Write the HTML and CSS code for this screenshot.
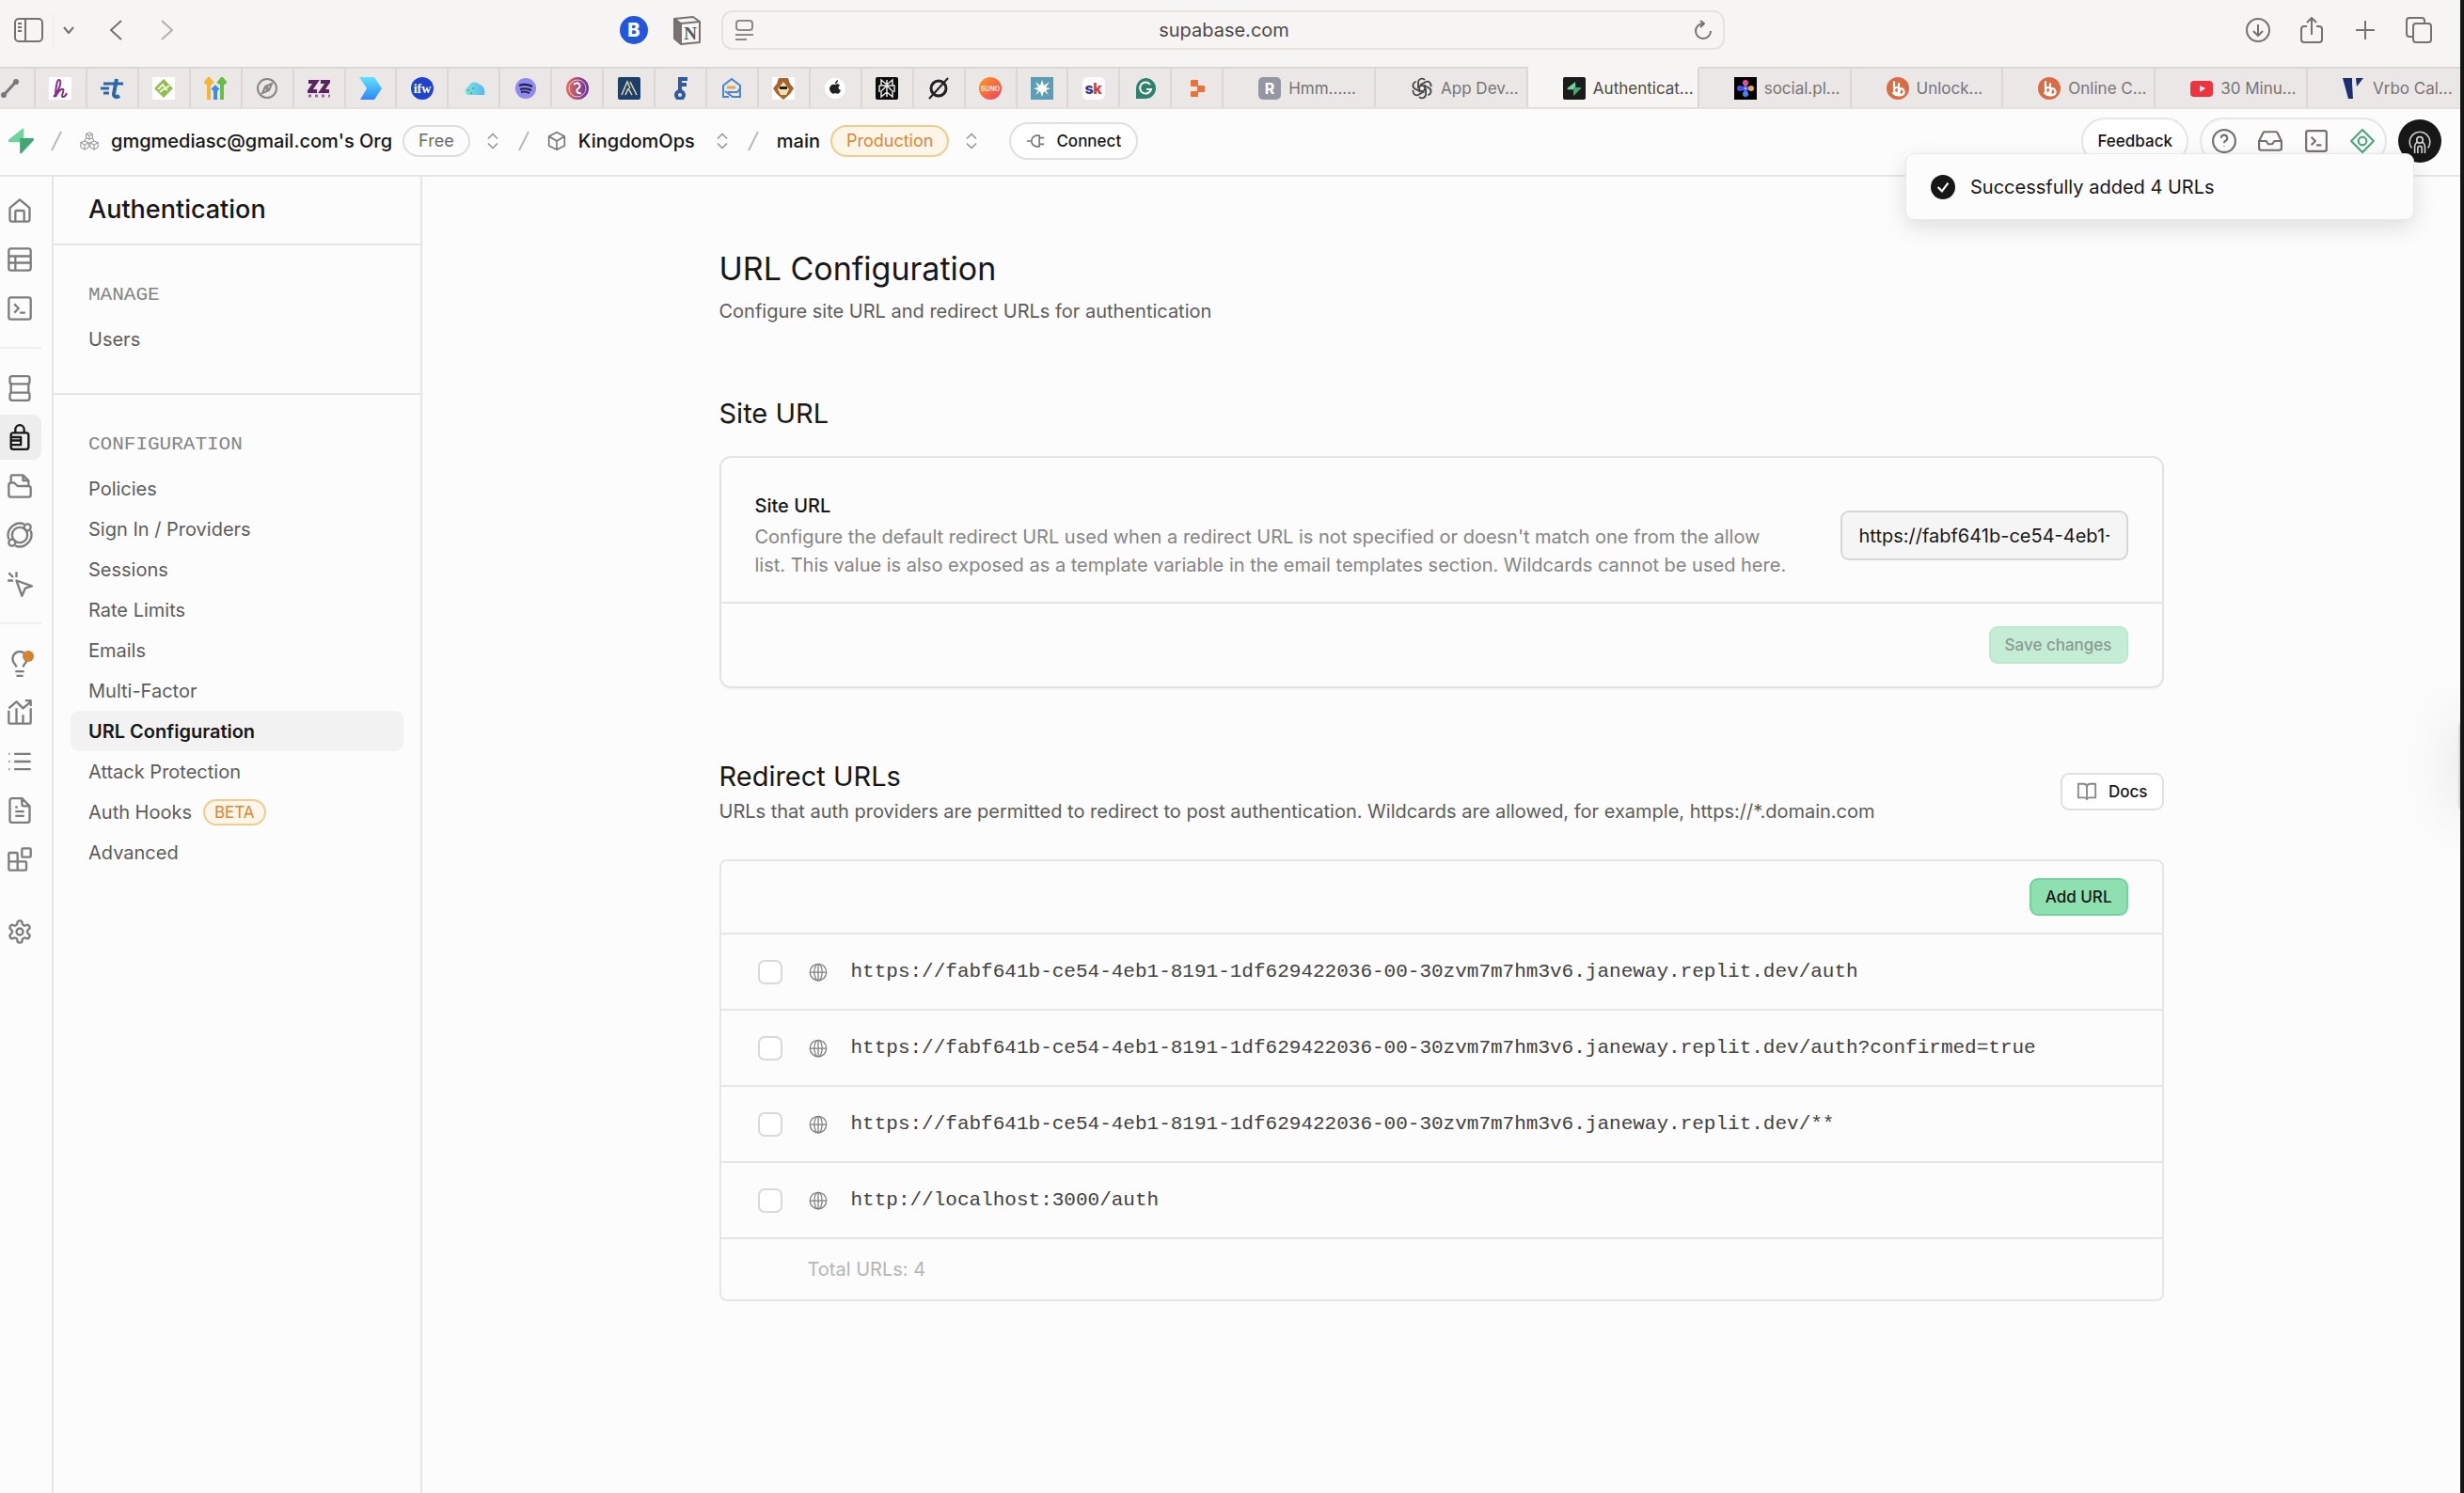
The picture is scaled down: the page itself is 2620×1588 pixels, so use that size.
FILE: index.html
```html
<!DOCTYPE html>
<html lang="en">
<head>
<meta charset="utf-8">
<meta name="viewport" content="width=device-width, initial-scale=1">
<title>Authentication | Supabase</title>
<link rel="stylesheet" href="styles.css">
</head>
<body>
<svg class="defs" aria-hidden="true">
  <defs>
    <linearGradient id="cyan" x1="0" y1="0" x2="0" y2="1"><stop offset="0" stop-color="#5fe3fb"/><stop offset="1" stop-color="#2f86f6"/></linearGradient>
    <linearGradient id="cloud" x1="0" y1="0" x2="1" y2="0"><stop offset="0" stop-color="#7fe6d2"/><stop offset="1" stop-color="#58b6f5"/></linearGradient>
    <linearGradient id="plum" x1="0" y1="0" x2="1" y2="0"><stop offset="0" stop-color="#e4705a"/><stop offset="1" stop-color="#6a2aa0"/></linearGradient>
    <linearGradient id="sun" x1="0" y1="0" x2="1" y2="1"><stop offset="0" stop-color="#fb9b1e"/><stop offset="1" stop-color="#f23c64"/></linearGradient>
    <symbol id="updown" viewBox="0 0 24 24"><path d="m6 9 6-6 6 6M6 15l6 6 6-6"/></symbol>
    <symbol id="slash" viewBox="0 0 12 24"><path d="M11 2 1 22"/></symbol>
    <symbol id="terminal" viewBox="0 0 24 24"><rect x="2" y="2" width="20" height="20" rx="2"/><path d="m7 8 4 4-4 4M12 16h5"/></symbol>
    <symbol id="globe" viewBox="0 0 24 24"><circle cx="12" cy="12" r="10.500"/><ellipse cx="12" cy="12" rx="5" ry="10.500"/><path d="M1.500 12h21M12 1.500v21"/></symbol>
    <symbol id="bolt" viewBox="0 0 24 24"><path fill="#6fd39c" d="M13.500.8c.6-.8 1.200-.3 1.200.5v8.200h8c1.100 0 1.600 1.200.9 2L14.700 13H2c-1.200 0-1.800-1.300-1-2.200z"/><path fill="#3fa873" d="M11.300 9.500h11.400c1.100 0 1.600 1.200.9 2L12.600 23.300c-.5.600-1.300.3-1.300-.5z"/></symbol>
    <symbol id="bb" viewBox="0 0 24 24"><circle cx="12" cy="12" r="12" fill="#d96b45"/><path d="M8 5v9a3 3 0 0 0 6 0 3 3 0 0 0-6 0M13 7v6M13 14a3 3 0 1 0 5 0 3 3 0 0 0-5-1M7 17c3 3 8 3 11 1" fill="none" stroke="#fff" stroke-width="2.200" stroke-linecap="round"/></symbol>
  </defs>
</svg>

<div class="window">
  <header class="toolbar">
    <div class="toolbar-side">
      <button class="tool" aria-label="Show sidebar"><svg class="i32" viewBox="0 0 32 32"><rect x="1" y="4" width="29" height="24" rx="4"/><path d="M12 4v24M4 9h4M4 13h4M4 17h4"/></svg></button>
      <span class="tool-sep"></span>
      <button class="tool tool-menu" aria-label="Tab groups"><svg class="i14" viewBox="0 0 14 14"><path d="m2 4 5 6 5-6"/></svg></button>
      <button class="tool tool-back" aria-label="Back"><svg class="i28" viewBox="0 0 28 28"><path d="M20 4 9 14l11 10"/></svg></button>
      <button class="tool dim" aria-label="Forward"><svg class="i28" viewBox="0 0 28 28"><path d="m8 4 11 10L8 24"/></svg></button>
    </div>
    <div class="address-group">
      <button class="tool" aria-label="Extension B"><svg class="i30" viewBox="0 0 30 30"><circle cx="15" cy="15" r="15" fill="#2257dd" stroke="none"/><text x="15" y="22" class="fav-text" font-size="20" font-weight="800" fill="#fff">B</text></svg></button>
      <button class="tool tool-notion" aria-label="Notion"><svg class="i32" viewBox="0 0 32 32"><path d="m2 4 20-2 7 5v22l-20 2-7-6zM2 4l7 5v22M9 9l20-2"/><path d="m3 5 6 5v19l-6-5z" fill="#777371"/><text x="19" y="26" class="fav-serif" font-size="19" font-weight="700" fill="#5c5856">N</text></svg></button>
      <div class="address">
        <svg class="i22" viewBox="0 0 22 22"><rect x="2" y="1" width="17" height="10" rx="3"/><path d="M1 16h19M1 21h12"/></svg>
        <span class="address-text">supabase.com</span>
        <button class="tool" aria-label="Reload"><svg class="i22" viewBox="0 0 22 22"><path d="M11 4a8 8 0 1 0 8 8M8 1l4 3-4 4"/></svg></button>
      </div>
    </div>
    <div class="toolbar-actions">
      <button class="tool" aria-label="Downloads"><svg class="i28" viewBox="0 0 28 28"><circle cx="14" cy="14" r="12"/><path d="M14 8v12M9 15l5 5 5-5"/></svg></button>
      <button class="tool" aria-label="Share"><svg class="i28" viewBox="0 0 28 28"><path d="M9 10H6a3 3 0 0 0-3 3v11a3 3 0 0 0 3 3h16a3 3 0 0 0 3-3V13a3 3 0 0 0-3-3h-3M14 19V1M9 6l5-5 5 5"/></svg></button>
      <button class="tool" aria-label="New tab"><svg class="i28" viewBox="0 0 28 28"><path d="M14 4v20M4 14h20"/></svg></button>
      <button class="tool" aria-label="Tab overview"><svg class="i28" viewBox="0 0 28 28"><rect x="8" y="7" width="19" height="20" rx="3"/><path d="M8 21H4a3 3 0 0 1-3-3V4a3 3 0 0 1 3-3h13a3 3 0 0 1 3 3v3"/></svg></button>
    </div>
  </header>

  <nav class="tabs" aria-label="Browser tabs">
    <a class="pin first" href="#"><svg class="fav" viewBox="0 0 24 24"><path d="M4 19 16 6" stroke="#777" stroke-width="3"/><circle cx="4" cy="19" r="3" fill="#777"/><circle cx="17" cy="5" r="3" fill="#777"/></svg></a>
    <a class="pin" href="#"><svg class="fav" viewBox="0 0 24 24"><path fill="#fff" d="M0 0h24v24H0z"/><path d="M5 21C11 15 14 4 11 3S7 15 7 21c2-5 6-9 8-8s-3 8 0 8 3-2 4-4" fill="none" stroke="#8a2b90" stroke-width="2"/></svg></a>
    <a class="pin" href="#"><svg class="fav" viewBox="0 0 24 24"><path d="M3 7h8M0 12h9M3 17h6M11 7h13" stroke="#2b66a8" stroke-width="3"/><path d="m17 2-3 16c0 3 3 4 6 2" fill="none" stroke="#2b66a8" stroke-width="4"/></svg></a>
    <a class="pin" href="#"><svg class="fav" viewBox="0 0 24 24"><path fill="#fff" d="M0 0h24v24H0z"/><path fill="#94bd50" d="m12 2 10 10-10 10L2 12z"/><path d="m6 13 5-5 3 4 4-3M8 16l5-4 3 2" fill="none" stroke="#eef6dd" stroke-width="2"/></svg></a>
    <a class="pin" href="#"><svg class="fav" viewBox="0 0 24 24" fill="none" stroke-width="4"><path stroke="#f3b532" d="M5 24V4M1 7l4-5 4 5"/><path stroke="#3d8bf0" d="M12 24V12M9 14l3-3 3 3"/><path stroke="#65bf43" d="M19 24V4M15 7l4-5 4 5"/></svg></a>
    <a class="pin" href="#"><svg class="fav" viewBox="0 0 24 24" fill="none" stroke="#888583" stroke-width="2"><circle cx="12" cy="12" r="10"/><path d="m17 7-3 7-7 3 3-7z"/><circle cx="12" cy="12" r="1"/></svg></a>
    <a class="pin" href="#"><svg class="fav" viewBox="0 0 24 24"><path d="M1 5h8L2 15h8M14 5h8l-7 10h8" fill="none" stroke="#5a2361" stroke-width="4"/><path d="M1 20h23" stroke="#9d6aa3" stroke-width="3" stroke-dasharray="3 4"/></svg></a>
    <a class="pin" href="#"><svg class="fav" viewBox="0 0 24 24"><path fill="url(#cyan)" d="M0 0h16l8 12-8 12H1l7-12z"/></svg></a>
    <a class="pin" href="#"><svg class="fav" viewBox="0 0 24 24"><circle cx="12" cy="12" r="12" fill="#2043cf"/><text x="12" y="17" class="fav-serif" font-size="14" font-weight="700" fill="#fff">ifw</text></svg></a>
    <a class="pin" href="#"><svg class="fav" viewBox="0 0 24 24"><path fill="url(#cloud)" d="M5 19a5 5 0 0 1 1-9 7 7 0 0 1 12-2c4 1 6 5 5 11z"/><path d="M6 14h.1M9 17h.1M11 12h.1" stroke="#3aa6c9" stroke-width="2" stroke-linecap="round"/></svg></a>
    <a class="pin" href="#"><svg class="fav" viewBox="0 0 24 24"><circle cx="12" cy="12" r="11" fill="#8f8af0"/><path d="M5 9c5-2 10-1 14 1M6 13c4-1 8-1 12 1M7 16c4-1 7 0 9 1" fill="none" stroke="#22204a" stroke-width="2"/></svg></a>
    <a class="pin" href="#"><svg class="fav" viewBox="0 0 24 24"><circle cx="12" cy="12" r="12" fill="url(#plum)"/><circle cx="12" cy="12" r="9" fill="none" stroke="#fff" stroke-opacity=".7"/><path d="M8 8c5-4 9 1 5 4s0 6 3 5" fill="none" stroke="#fff" stroke-width="2"/></svg></a>
    <a class="pin" href="#"><svg class="fav" viewBox="0 0 24 24"><rect width="24" height="24" rx="2" fill="#1d3f6c"/><path d="m4 19 6-14 3 7M8 19l3-7M13 5l7 14M11 12l4 7" fill="none" stroke="#e3d9a6" stroke-width="1.500"/></svg></a>
    <a class="pin" href="#"><svg class="fav" viewBox="0 0 24 24" fill="none" stroke="#31599f" stroke-width="4"><circle cx="11" cy="19" r="4"/><path d="M11 15V2h8M11 8h7"/></svg></a>
    <a class="pin" href="#"><svg class="fav" viewBox="0 0 24 24" fill="none" stroke="#4a86cf" stroke-width="2"><path d="M9 21H3V9l9-7 9 7v12h-8L5 15M21 12l-3 4H8"/><path stroke="#e6a93c" stroke-width="3" d="M7 11h9"/></svg></a>
    <a class="pin" href="#"><svg class="fav" viewBox="0 0 24 24"><path fill="#fff" d="M0 0h24v24H0z"/><path fill="#a9642b" d="m7 1 10 0 2 6 4 5-4 6-7 6-7-6-4-6 4-5z"/><path fill="#efe3b4" d="m12 5 6 8-3 6H9l-3-6z"/><path fill="#26201c" d="M8 10h8v3H8z"/></svg></a>
    <a class="pin" href="#"><svg class="fav" viewBox="0 0 24 24"><circle cx="12" cy="12" r="11" fill="#fff"/><path fill="#222" d="M12 8c2-1 4-1 5 1-2 1-2 4 1 5-1 3-3 5-6 3-3 2-5-1-6-4 0-4 3-6 6-5zM12 7c0-2 1-3 3-4 0 2-1 4-3 4z"/></svg></a>
    <a class="pin" href="#"><svg class="fav" viewBox="0 0 24 24"><rect width="24" height="24" rx="2" fill="#0d0d0d"/><path d="M12 3v18M12 8 6 3v6M12 8l6-5v6M4 9h16v7M4 9v7M12 9l-6 6v6l6-5M12 9l6 6v6l-6-5" fill="none" stroke="#e6e6e6" stroke-width="1.500"/></svg></a>
    <a class="pin" href="#"><svg class="fav" viewBox="0 0 24 24" fill="none" stroke="#222" stroke-width="3"><ellipse cx="12" cy="12" rx="8" ry="8"/><path stroke-width="2" d="M2 23 22 1"/></svg></a>
    <a class="pin" href="#"><svg class="fav" viewBox="0 0 24 24"><circle cx="12" cy="12" r="12" fill="url(#sun)"/><text x="12" y="15" class="fav-text" font-size="7" font-weight="700" fill="#ffe9d6">SUNO</text></svg></a>
    <a class="pin" href="#"><svg class="fav" viewBox="0 0 24 24"><path fill="#5c9db3" d="M0 0h24v24H0z"/><path fill="#fff" d="m12 3 2 6 6-4-4 6 5 1-5 2 3 5-5-4-2 6-2-6-5 4 3-5-5-2 5-1-3-6 5 4z"/></svg></a>
    <a class="pin" href="#"><svg class="fav" viewBox="0 0 24 24"><rect width="24" height="24" rx="5" fill="#fbfafc"/><text x="7" y="18" class="fav-text" font-size="16" font-weight="800" fill="#2c3196">s</text><text x="16" y="18" class="fav-text" font-size="16" font-weight="800" fill="#e2353c">k</text></svg></a>
    <a class="pin" href="#"><svg class="fav" viewBox="0 0 24 24"><path fill="#2f806c" d="M12 1a11 11 0 1 1 0 22H2V12A11 11 0 0 1 12 1z"/><path d="M17 8a6 6 0 1 0 1 5h-5" fill="none" stroke="#fff" stroke-width="2"/></svg></a>
    <a class="pin" href="#"><svg class="fav" viewBox="0 0 24 24" fill="#ee7035"><rect x="5" y="3" width="8" height="7" rx="1"/><rect x="12" y="9" width="8" height="7" rx="1"/><rect x="5" y="15" width="8" height="6" rx="1"/></svg></a>
    <a class="tab" href="#"><svg class="fav" viewBox="0 0 24 24"><rect width="24" height="24" rx="5" fill="#9596a3"/><text x="12" y="18" class="fav-text" font-size="16" font-weight="700" fill="#fff">R</text></svg><span>Hmm......</span></a>
    <a class="tab" href="#"><svg class="fav" viewBox="0 0 24 24" fill="none" stroke="#444" stroke-width="1.800"><path d="M12 8.500 8 11v-6a4 4 0 0 1 7-2"/><path d="M12 8.500 8 11v-6a4 4 0 0 1 7-2" transform="rotate(60 12 12)"/><path d="M12 8.500 8 11v-6a4 4 0 0 1 7-2" transform="rotate(120 12 12)"/><path d="M12 8.500 8 11v-6a4 4 0 0 1 7-2" transform="rotate(180 12 12)"/><path d="M12 8.500 8 11v-6a4 4 0 0 1 7-2" transform="rotate(240 12 12)"/><path d="M12 8.500 8 11v-6a4 4 0 0 1 7-2" transform="rotate(300 12 12)"/></svg><span>App Dev...</span></a>
    <a class="tab active" href="#" aria-current="page"><svg class="fav" viewBox="0 0 24 24"><rect width="24" height="24" rx="2" fill="#1b1b1b"/><svg x="4" y="5" width="15" height="15"><use href="#bolt"/></svg></svg><span>Authenticat...</span></a>
    <a class="tab" href="#"><svg class="fav" viewBox="0 0 24 24"><path d="M0 0h24v24H0z"/><path d="M12 6v12M6 12h12" stroke="#4a5af2" stroke-width="4"/><circle cx="12" cy="6" r="3" fill="#e9508e"/><circle cx="6" cy="12" r="3" fill="#4c4ff0"/><circle cx="18" cy="12" r="3" fill="#f5a43a"/><circle cx="12" cy="18" r="3" fill="#3d8bf2"/><circle cx="12" cy="12" r="1" fill="#fff"/></svg><span>social.pl...</span></a>
    <a class="tab" href="#"><svg class="fav"><use href="#bb"/></svg><span>Unlock...</span></a>
    <a class="tab" href="#"><svg class="fav"><use href="#bb"/></svg><span>Online C...</span></a>
    <a class="tab" href="#"><svg class="fav" viewBox="0 0 24 24"><rect y="4" width="24" height="17" rx="4" fill="#ee3440"/><path fill="#fff" d="m10 9 6 3-6 4z"/></svg><span>30 Minu...</span></a>
    <a class="tab" href="#"><svg class="fav" viewBox="0 0 24 24"><path fill="#1c2f6e" d="M0 1h10v6l1 16H6zM14 1h8l-7 9z"/></svg><span>Vrbo Cal...</span></a>
  </nav>

  <header class="app-bar">
    <div class="crumbs">
      <a class="brand" href="#" aria-label="Supabase"><svg class="i28"><use href="#bolt"/></svg></a>
      <svg class="slash"><use href="#slash"/></svg>
      <a class="crumb" href="#"><svg class="i20 thin" viewBox="0 0 24 24"><path d="m12 1 4 2v5l-4 2-4-2V3zM8 3l4 2 4-2M12 5v5M6 12l5 2v6l-5 3-5-3v-6zM1 14l5 3 5-3M6 17v6M18 12l5 2v6l-5 3-5-3v-6zM13 14l5 3 5-3M18 17v6M8 8l-2 4M16 8l2 4"/></svg><span>gmgmediasc@gmail.com's Org</span></a>
      <span class="pill">Free</span>
      <button class="tool switcher" aria-label="Switch organization"><svg class="i20"><use href="#updown"/></svg></button>
      <svg class="slash"><use href="#slash"/></svg>
      <a class="crumb" href="#"><svg class="i20" viewBox="0 0 24 24"><path d="m12 1 10 5v12l-10 5-10-5V6zM2 6l10 6 10-6M12 12v11"/></svg><span>KingdomOps</span></a>
      <button class="tool switcher" aria-label="Switch project"><svg class="i20"><use href="#updown"/></svg></button>
      <svg class="slash"><use href="#slash"/></svg>
      <a class="crumb" href="#"><span>main</span></a>
      <span class="pill amber">Production</span>
      <button class="tool switcher" aria-label="Switch branch"><svg class="i20"><use href="#updown"/></svg></button>
      <button class="connect"><svg class="i20" viewBox="0 0 24 24"><path d="M1 12h6M17 5h-3a7 7 0 0 0 0 14h3zM17 8h6M17 16h6"/></svg>Connect</button>
    </div>
    <div class="account">
      <button class="feedback">Feedback</button>
      <div class="helpers">
        <button class="tool" aria-label="Help"><svg class="i26" viewBox="0 0 24 24"><circle cx="12" cy="12" r="11"/><path d="M9 9a3 3 0 1 1 4 3c-1 .5-1 1-1 2M12 17v.5"/></svg></button>
        <button class="tool" aria-label="Inbox"><svg class="i26" viewBox="0 0 24 24"><path d="M22 12h-6l-2 3h-4l-2-3H2M5 4 1 12v7a2 2 0 0 0 2 2h18a2 2 0 0 0 2-2v-7l-4-8a2 2 0 0 0-1-1H6a2 2 0 0 0-1 1z"/></svg></button>
        <button class="tool" aria-label="SQL editor"><svg class="i26"><use href="#terminal"/></svg></button>
        <button class="tool leaf" aria-label="Assistant"><svg class="i26" viewBox="0 0 24 24"><path d="m12 1 11 11-11 11L1 12z"/><circle cx="12" cy="12" r="4"/></svg></button>
      </div>
      <button class="avatar" aria-label="Account"><svg class="i26" viewBox="0 0 24 24"><path d="M4 19a10 10 0 1 1 16 0M7 24v-6c0-2 1-4 3-5M17 24v-6c0-2-1-4-3-5M10 24v-5a2 2 0 0 1 4 0v5"/><circle cx="12" cy="11" r="3"/></svg></button>
    </div>
    <div class="toast" role="status"><svg class="i26" viewBox="0 0 24 24"><circle cx="12" cy="12" r="12" fill="#171717"/><path d="m7 12 4 4 6-8" fill="none" stroke="#fff" stroke-width="2"/></svg>Successfully added 4 URLs</div>
  </header>

  <div class="workspace">
    <nav class="rail" aria-label="Product">
      <div class="rail-group">
        <a href="#" aria-label="Home"><svg class="i28" viewBox="0 0 24 24"><path d="M3 9.500 12 2l9 7.500V20a2 2 0 0 1-2 2H5a2 2 0 0 1-2-2zM8 22v-9a1 1 0 0 1 1-1h6a1 1 0 0 1 1 1v9"/></svg></a>
        <a href="#" aria-label="Table editor"><svg class="i28" viewBox="0 0 24 24"><rect x="2" y="2" width="20" height="20" rx="2"/><path d="M2 9h20M2 15h20M8 9v13"/></svg></a>
        <a href="#" aria-label="SQL editor"><svg class="i28"><use href="#terminal"/></svg></a>
      </div>
      <div class="rail-group">
        <a href="#" aria-label="Database"><svg class="i28" viewBox="0 0 24 24"><rect x="3" y="1" width="18" height="7" rx="2"/><rect x="3" y="16" width="18" height="7" rx="2"/><path d="M4 8v8M20 8v8"/></svg></a>
        <a class="on" href="#" aria-label="Authentication"><svg class="i28" viewBox="0 0 24 24"><rect x="4" y="8" width="16" height="15" rx="2"/><path d="M8 8V5a4 4 0 0 1 8 0v3M4 12h9v7H4M4 15h8"/></svg></a>
        <a href="#" aria-label="Storage"><svg class="i28" viewBox="0 0 24 24"><path d="M4 9V3a1 1 0 0 1 1-1h10l5 5v4M15 2v5h5M2 20V11a2 2 0 0 1 2-2h3l3 3h10a2 2 0 0 1 2 2v6a2 2 0 0 1-2 2H4a2 2 0 0 1-2-2z"/></svg></a>
        <a href="#" aria-label="Edge Functions"><svg class="i28" viewBox="0 0 24 24"><path d="M16 2A11 11 0 0 0 2 16M8 22A11 11 0 0 0 22 8"/><circle cx="12" cy="12" r="7"/><circle cx="19" cy="5" r="3"/><circle cx="5" cy="19" r="3"/></svg></a>
        <a href="#" aria-label="Realtime"><svg class="i28" viewBox="0 0 24 24"><path d="m9 9 14 5-6 2-3 7zM9 1v5M1 9h5M2 2l4 4"/></svg></a>
      </div>
      <div class="rail-group">
        <a class="alert" href="#" aria-label="Advisors"><svg class="i28" viewBox="0 0 24 24"><path d="M15 15c.3-1.500.8-2.200 2-3.500A6.500 6.500 0 1 0 7 11.500c1.200 1.300 1.700 2 2 3.500M8 19h8M9 23h6"/></svg></a>
        <a href="#" aria-label="Reports"><svg class="i28" viewBox="0 0 24 24"><path d="M2 10v11a1 1 0 0 0 1 1h18a1 1 0 0 0 1-1V8M2 8l7-6 6 6 7-6M17 1h5v5M9 8v14M15 14v8"/></svg></a>
        <a href="#" aria-label="Logs"><svg class="i28" viewBox="0 0 24 24"><path d="M7 5h15M7 12h15M7 19h15M2 5h1M2 12h1M2 19h1"/></svg></a>
        <a href="#" aria-label="API docs"><svg class="i28" viewBox="0 0 24 24"><path d="M14 1H5a2 2 0 0 0-2 2v18a2 2 0 0 0 2 2h14a2 2 0 0 0 2-2V8zM14 1v5a2 2 0 0 0 2 2h5M8 9h2M8 13h8M8 17h8"/></svg></a>
        <a href="#" aria-label="Integrations"><svg class="i28" viewBox="0 0 24 24"><rect x="14" y="2" width="8" height="8" rx="1"/><path d="M10 22V7a1 1 0 0 0-1-1H3a1 1 0 0 0-1 1v14a1 1 0 0 0 1 1h14a1 1 0 0 0 1-1v-6a1 1 0 0 0-1-1H2"/></svg></a>
      </div>
      <div class="rail-group">
        <a href="#" aria-label="Project settings"><svg class="i28" viewBox="0 0 24 24"><path d="M12.220 2h-.44a2 2 0 0 0-2 2v.18a2 2 0 0 1-1 1.730l-.43.250a2 2 0 0 1-2 0l-.15-.08a2 2 0 0 0-2.730.730l-.22.380a2 2 0 0 0 .730 2.730l.150.100a2 2 0 0 1 1 1.720v.510a2 2 0 0 1-1 1.740l-.15.090a2 2 0 0 0-.73 2.730l.220.380a2 2 0 0 0 2.730.730l.150-.08a2 2 0 0 1 2 0l.430.250a2 2 0 0 1 1 1.730V20a2 2 0 0 0 2 2h.440a2 2 0 0 0 2-2v-.18a2 2 0 0 1 1-1.730l.430-.25a2 2 0 0 1 2 0l.150.080a2 2 0 0 0 2.730-.73l.220-.39a2 2 0 0 0-.73-2.730l-.15-.08a2 2 0 0 1-1-1.740v-.5a2 2 0 0 1 1-1.740l.150-.09a2 2 0 0 0 .730-2.730l-.22-.38a2 2 0 0 0-2.730-.73l-.15.080a2 2 0 0 1-2 0l-.43-.25a2 2 0 0 1-1-1.730V4a2 2 0 0 0-2-2z"/><circle cx="12" cy="12" r="3"/></svg></a>
      </div>
    </nav>

    <aside class="sidebar">
      <h2 class="sidebar-title">Authentication</h2>
      <section class="menu">
        <h3>MANAGE</h3>
        <ul>
          <li><a href="#">Users</a></li>
        </ul>
      </section>
      <section class="menu">
        <h3>CONFIGURATION</h3>
        <ul>
          <li><a href="#">Policies</a></li>
          <li><a href="#">Sign In / Providers</a></li>
          <li><a href="#">Sessions</a></li>
          <li><a href="#">Rate Limits</a></li>
          <li><a href="#">Emails</a></li>
          <li><a href="#">Multi-Factor</a></li>
          <li><a class="on" href="#" aria-current="page">URL Configuration</a></li>
          <li><a href="#">Attack Protection</a></li>
          <li><a href="#">Auth Hooks <span class="beta">BETA</span></a></li>
          <li><a href="#">Advanced</a></li>
        </ul>
      </section>
    </aside>

    <main class="content">
      <div class="column">
        <h1>URL Configuration</h1>
        <p class="lede">Configure site URL and redirect URLs for authentication</p>

        <h2 class="section-title">Site URL</h2>
        <form class="card">
          <div class="field">
            <div class="field-text">
              <label for="site-url">Site URL</label>
              <p>Configure the default redirect URL used when a redirect URL is not specified or doesn't match one from the allow<br>list. This value is also exposed as a template variable in the email templates section. Wildcards cannot be used here.</p>
            </div>
            <input id="site-url" type="text" value="https://fabf641b-ce54-4eb1-">
          </div>
          <div class="card-foot"><button class="btn primary" type="button" disabled>Save changes</button></div>
        </form>

        <div class="section-head">
          <div>
            <h2 class="section-title">Redirect URLs</h2>
            <p class="lede">URLs that auth providers are permitted to redirect to post authentication. Wildcards are allowed, for example, https://*.domain.com</p>
          </div>
          <a class="btn" href="#"><svg class="i22" viewBox="0 0 24 24"><path d="M12 5v16M2 3h6a4 4 0 0 1 4 3 4 4 0 0 1 4-3h6v16h-7a3 3 0 0 0-3 2 3 3 0 0 0-3-2H2z"/></svg>Docs</a>
        </div>
        <div class="list">
          <div class="list-head"><button class="btn primary">Add URL</button></div>
          <ul>
            <li><input type="checkbox" id="u1"><label for="u1"><svg class="i20"><use href="#globe"/></svg>https://fabf641b-ce54-4eb1-8191-1df629422036-00-30zvm7m7hm3v6.janeway.replit.dev/auth</label></li>
            <li><input type="checkbox" id="u2"><label for="u2"><svg class="i20"><use href="#globe"/></svg>https://fabf641b-ce54-4eb1-8191-1df629422036-00-30zvm7m7hm3v6.janeway.replit.dev/auth?confirmed=true</label></li>
            <li><input type="checkbox" id="u3"><label for="u3"><svg class="i20"><use href="#globe"/></svg>https://fabf641b-ce54-4eb1-8191-1df629422036-00-30zvm7m7hm3v6.janeway.replit.dev/**</label></li>
            <li><input type="checkbox" id="u4"><label for="u4"><svg class="i20"><use href="#globe"/></svg>http://localhost:3000/auth</label></li>
          </ul>
          <div class="list-foot">Total URLs: 4</div>
        </div>
      </div>
      <div class="edge-glow"></div>
    </main>
  </div>
</div>
</body>
</html>
```
FILE: styles.css
```css
* { box-sizing: border-box; }

:root {
  --ink: #171717;
  --body: #5c5c5c;
  --muted: #858585;
  --line: #e6e6e6;
  --sans: Inter, "Liberation Sans", sans-serif;
  --mono: "Liberation Mono", monospace;
}

html { height: 100%; }

body {
  margin: 0;
  min-height: 100%;
  display: flex;
  background: #141616;
  color: var(--ink);
  font: 20px/30px var(--sans);
}

h1, h2, h3, p, ul { margin: 0; padding: 0; font-weight: 400; }
ul { list-style: none; }
a { color: inherit; text-decoration: none; }
button, input { font: inherit; color: inherit; }
svg { flex: none; }
.defs { position: absolute; width: 0; height: 0; }

.window {
  flex: 1;
  min-width: 0;
  margin-right: 4px;
  display: flex;
  flex-direction: column;
  background: #fcfcfc;
  overflow: hidden;
}

.i14 { width: 14px; height: 14px; }
.i20 { width: 20px; height: 20px; }
.i22 { width: 22px; height: 22px; }
.i26 { width: 26px; height: 26px; }
.i28 { width: 28px; height: 28px; }
.i30 { width: 30px; height: 30px; }
.i32 { width: 32px; height: 32px; }

.tool, .rail a, .crumb, .connect, .avatar, .address, .btn, .list label, .slash {
  fill: none;
  stroke-width: 2;
  stroke-linejoin: round;
}
.tool { display: flex; padding: 0; border: 0; background: none; stroke: #75716f; }
.dim { stroke: #b3afad; }
.fav-text { font-family: var(--sans); text-anchor: middle; stroke: none; }
.fav-serif { font-family: "Liberation Serif", serif; text-anchor: middle; stroke: none; }

/* browser toolbar */
.toolbar {
  height: 71px;
  padding: 0 30px 8px 15px;
  display: grid;
  grid-template-columns: 644px 1fr 752px;
  align-items: center;
  background: #f7f5f4;
}
.toolbar-side, .toolbar-actions, .address-group { display: flex; align-items: center; }
.tool-sep { width: 1px; height: 34px; margin: 0 9px; background: #ebe8e6; }
.tool-back { margin: 0 27px 0 29px; }
.address-group { gap: 26px; }
.tool-notion { margin-right: -6px; }
.address {
  flex: 1;
  height: 42px;
  padding: 0 10px 0 12px;
  display: flex;
  align-items: center;
  justify-content: space-between;
  border: 2px solid #e6e2e0;
  border-radius: 12px;
  stroke: #8d8987;
}
.address-text { color: #4c4a49; }
.toolbar-actions { justify-content: flex-end; gap: 29px; }

/* browser tabs */
.tabs {
  height: 45px;
  display: flex;
  background: #eae7e6;
  border-bottom: 2px solid #e3e0de;
}
.tabs a {
  display: flex;
  align-items: center;
  border-top: 2px solid #dad6d4;
  border-right: 2px solid #dcd7d5;
  color: #777473;
  font-size: 17px;
  white-space: nowrap;
}
.pin { flex: 0 1 55px; justify-content: center; }
.tabs .first { flex: 0 0 38px; justify-content: flex-start; }
.tab { flex: 1 1 162px; gap: 8px; padding-left: 37px; overflow: hidden; }
.tabs .active { flex-basis: 182px; background: #f7f5f4; border-top-color: #f7f5f4; color: #4c4a49; }
.fav { width: 24px; height: 24px; }
.tabs .tab:last-child { border-right: 0; }

/* application header */
.app-bar {
  position: relative;
  min-height: 72px;
  display: flex;
  justify-content: space-between;
  border-bottom: 2px solid var(--line);
}
.crumbs, .account { display: flex; align-items: center; padding-bottom: 2px; }
.crumbs { padding-left: 8px; }
.brand { display: flex; margin-right: 5px; }
.slash { width: 12px; height: 24px; margin: 0 19px 0 13px; stroke: #b9b9b9; }
.crumb { display: flex; align-items: center; gap: 13px; font-weight: 500; stroke: #777; }
.thin { stroke-width: 1px; }
.pill {
  height: 34px;
  margin-left: 11px;
  padding: 0 15px;
  border: 2px solid #dedede;
  border-radius: 17px;
  color: #6b6b6b;
  font-size: 18px;
  line-height: 30px;
}
.amber { border-color: #f0cd8f; background: #fdf5e8; color: #d98736; }
.switcher { margin-left: 10px; padding: 0 4px; stroke: #979797; }
.crumb + .switcher { margin-left: 15px; }
.connect {
  height: 40px;
  margin-left: 26px;
  padding: 0 16px;
  display: flex;
  align-items: center;
  gap: 12px;
  border: 2px solid #e0e0e0;
  border-radius: 20px;
  background: #fff;
  font-size: 17px;
  font-weight: 500;
  stroke: #777;
}
.account { padding-right: 20px; gap: 12px; }
.feedback {
  height: 50px;
  padding: 0 15px;
  border: 2px solid var(--line);
  border-radius: 25px;
  background: #fff;
  font-size: 17px;
  font-weight: 500;
}
.helpers {
  height: 50px;
  padding: 0 11px;
  display: flex;
  align-items: center;
  gap: 23px;
  border: 2px solid var(--line);
  border-radius: 25px;
}
.leaf { stroke: #4fa67a; }
.avatar {
  width: 46px;
  height: 46px;
  padding: 0;
  display: grid;
  place-items: center;
  border: 0;
  border-radius: 50%;
  background: #171717;
  stroke: #d0d0d0;
  stroke-width: 1.500;
}
.toast {
  position: absolute;
  z-index: 2;
  top: 47px;
  right: 49px;
  width: 541px;
  height: 71px;
  padding: 0 26px;
  display: flex;
  align-items: center;
  gap: 16px;
  border: 1px solid #e8e8e8;
  border-radius: 9px;
  background: #fcfcfc;
  box-shadow: 0 8px 24px rgba(0, 0, 0, .12);
}

/* icon rail */
.workspace { flex: 1; display: flex; }
.rail { flex: none; width: 57px; padding-top: 12px; border-right: 2px solid var(--line); }
.rail-group { display: flex; flex-direction: column; gap: 4px; margin-right: 11px; padding-bottom: 17px; }
.rail-group + .rail-group { padding-top: 18px; border-top: 2px solid #efefef; }
.rail-group:last-child { padding-top: 12px; border-top: 0; }
.rail a {
  position: relative;
  height: 48px;
  padding-right: 3px;
  display: grid;
  place-items: center;
  border-radius: 0 9px 9px 0;
  stroke: #7d7d7d;
}
.rail .on { background: #ededed; stroke: #171717; }
.alert::after {
  content: "";
  position: absolute;
  top: 10px;
  left: 24px;
  width: 12px;
  height: 12px;
  border-radius: 50%;
  background: #d38234;
}

/* section menu */
.sidebar { flex: none; width: 392px; border-right: 2px solid var(--line); }
.sidebar-title { height: 73px; padding-left: 37px; border-bottom: 2px solid var(--line); font-size: 27px; font-weight: 500; line-height: 70px; }
.menu { padding: 38px 18px 36px; }
.menu + .menu { border-top: 2px solid var(--line); }
.menu h3 { margin: 0 19px 10px; color: var(--muted); font: 21px/30px var(--mono); }
.menu a { height: 43px; padding-left: 19px; display: flex; align-items: center; gap: 12px; border-radius: 9px; color: var(--body); }
.menu .on { background: #f2f2f2; color: var(--ink); font-weight: 600; }
.beta { padding: 0 10px; border: 2px solid #f0cd8f; border-radius: 14px; background: #fdf5e8; color: #d98736; font-size: 17px; line-height: 24px; }

/* main content */
.content { position: relative; flex: 1; min-width: 0; padding: 73px 40px; overflow: hidden; }
.column { max-width: 1536px; margin: 0 auto; }
h1 { font-size: 34px; line-height: 50px; }
.lede { margin-top: 5px; color: var(--body); }
.section-title { font-size: 29px; line-height: 40px; }
.lede + .section-title { margin: 74px 0 25px; }
.card { border: 2px solid #e3e3e3; border-radius: 12px; box-shadow: 0 2px 2px rgba(0, 0, 0, .03); }
.field { padding: 36px 36px 24px; display: flex; align-items: center; justify-content: space-between; border-bottom: 2px solid var(--line); }
.field label { display: block; font-weight: 500; }
.field p { margin-top: 3px; color: var(--muted); }
.field input {
  width: 306px;
  height: 53px;
  padding: 0 18px;
  border: 2px solid #d6d6d6;
  border-radius: 9px;
  background: #f5f5f5;
}
.card-foot, .list-head { display: flex; justify-content: flex-end; padding: 24px 36px; }
.btn {
  height: 40px;
  padding: 0 15px;
  display: flex;
  align-items: center;
  gap: 12px;
  border: 2px solid #e0e0e0;
  border-radius: 9px;
  background: #fff;
  font-size: 17px;
  font-weight: 500;
  stroke: #888;
}
.primary { border-color: #75d19f; background: #8fe0b1; }
.primary:disabled { border-color: #bce8cf; background: #c5edd6; color: #8b9a91; }
.section-head { margin: 74px 0 36px; display: flex; justify-content: space-between; align-items: center; }
.section-head .lede { margin-top: 2px; }
.list { border: 2px solid var(--line); border-radius: 8px; }
.list-head { padding: 18px 36px; }
.list li { height: 81px; padding-left: 39px; display: flex; align-items: center; gap: 28px; border-top: 2px solid var(--line); }
.list label { display: flex; align-items: center; gap: 25px; color: #424242; font: 21px/30px var(--mono); stroke: #7d7d7d; stroke-width: 1.500; }
.list input {
  appearance: none;
  width: 26px;
  height: 26px;
  margin: 0;
  border: 2px solid #d9d9d9;
  border-radius: 7px;
  background: #fff;
}
.list-foot { padding: 17px 92px; border-top: 2px solid var(--line); color: #b5b5b5; }
.edge-glow {
  position: absolute;
  top: 582px;
  right: -20px;
  width: 20px;
  height: 90px;
  box-shadow: 0 0 56px 10px rgba(0, 0, 0, .09), 0 0 3px rgba(0, 0, 0, .4);
}
```
